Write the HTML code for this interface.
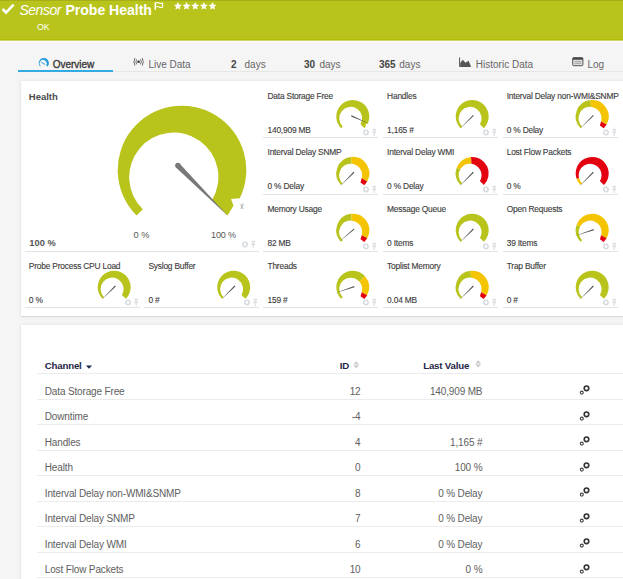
<!DOCTYPE html><html><head><meta charset="utf-8"><style>
*{margin:0;padding:0;box-sizing:border-box}
html,body{width:623px;height:579px;overflow:hidden;background:#f5f5f5;font-family:"Liberation Sans",sans-serif;position:relative}
.abs,.g,.wt,.wv,.dv,.tc,.tl{position:absolute}
#hdr{position:absolute;left:0;top:0;width:623px;height:40px;background:#b8c41c;border-top:1px solid #a6ae18;border-bottom:1px solid #b2bc06}
#hdrw{position:absolute;left:0;top:40px;width:623px;height:2px;background:linear-gradient(#cdd468 0,#cdd468 1px,#fdfdfd 1px)}
.ttl{position:absolute;color:#fff;white-space:nowrap}
.tab{position:absolute;top:58.6px;font-size:10px;color:#666;white-space:nowrap;line-height:12px}
.panel{position:absolute;background:#fff;box-shadow:0 0 4px rgba(0,0,0,0.09),0 1px 1px rgba(0,0,0,0.07)}
.wt,.wv{font-size:8.4px;letter-spacing:-0.2px;color:#3c3c3c;-webkit-text-stroke:0.12px #3c3c3c;white-space:nowrap;line-height:9px}
.dv{height:1px;background:#e3e3e3}
.tc{font-size:10px;letter-spacing:-0.15px;color:#606060;white-space:nowrap;line-height:11px}
.tr{text-align:right}
.tl{left:37px;width:586px;height:1px;background:#ececec}
.th{position:absolute;font-size:9.7px;letter-spacing:-0.2px;font-weight:bold;color:#1f2646;white-space:nowrap;line-height:11px}
</style></head><body>
<div id="hdr"></div><div id="hdrw"></div>
<svg class="g" style="left:1px;top:3px" width="14" height="12" viewBox="0 0 14 12"><path d="M1.6 6 L5 9.6 L12.6 1.6" stroke="#fff" stroke-width="2.6" fill="none"/></svg>
<div class="ttl" style="left:19.5px;top:2px;font-size:14px;font-style:italic;letter-spacing:-0.5px;line-height:17px">Sensor</div>
<div class="ttl" style="left:65.5px;top:2px;font-size:14px;font-weight:bold;line-height:17px">Probe Health</div>
<svg class="g" style="left:154px;top:2px" width="10" height="9" viewBox="0 0 10 9"><path d="M1.3 0.3V7.8" stroke="#fff" stroke-width="1.5" fill="none"/><path d="M2 1.1 Q3.6 0.2 5.2 1.1 T8.6 1.1 V5.0 Q7 5.9 5.2 5.0 T2 5.0" stroke="#fff" stroke-width="1.1" fill="none"/></svg>
<svg class="g" style="left:173.5px;top:0px" width="45" height="12"><path d="M3.90 2.00 L5.05 4.62 L7.89 4.90 L5.75 6.80 L6.37 9.60 L3.90 8.15 L1.43 9.60 L2.05 6.80 L-0.09 4.90 L2.75 4.62Z M12.55 2.00 L13.70 4.62 L16.54 4.90 L14.40 6.80 L15.02 9.60 L12.55 8.15 L10.08 9.60 L10.70 6.80 L8.56 4.90 L11.40 4.62Z M21.20 2.00 L22.35 4.62 L25.19 4.90 L23.05 6.80 L23.67 9.60 L21.20 8.15 L18.73 9.60 L19.35 6.80 L17.21 4.90 L20.05 4.62Z M29.85 2.00 L31.00 4.62 L33.84 4.90 L31.70 6.80 L32.32 9.60 L29.85 8.15 L27.38 9.60 L28.00 6.80 L25.86 4.90 L28.70 4.62Z M38.50 2.00 L39.65 4.62 L42.49 4.90 L40.35 6.80 L40.97 9.60 L38.50 8.15 L36.03 9.60 L36.65 6.80 L34.51 4.90 L37.35 4.62Z" fill="#fff"/></svg>
<div class="ttl" style="left:37px;top:22px;font-size:8.8px;line-height:10px">OK</div>

<div class="abs" style="left:18px;top:71px;width:605px;height:1px;background:#e6e6e6"></div>
<div class="abs" style="left:18px;top:70px;width:95px;height:2px;background:#33abe2"></div>
<svg class="g" style="left:37px;top:56px" width="14" height="12"><path d="M3.19 10.61 A5.10 5.10 0 1 1 10.41 10.61 L9.18 9.38 A3.54 3.54 0 1 0 3.69 10.11 Z" fill="#1e9ad6"/><path d="M4.7 6.4 L7.6 8.3" stroke="#4aaee0" stroke-width="1.1" stroke-linecap="round"/></svg>
<div class="tab" style="left:52.8px;color:#3d3d3d;font-size:10px;-webkit-text-stroke:0.35px #3d3d3d;letter-spacing:-0.05px">Overview</div>
<svg class="g" style="left:133px;top:57px" width="12" height="10" viewBox="0 0 12 10"><circle cx="5.6" cy="4.8" r="1.3" fill="#333"/><path d="M3.6 2.3 Q2.2 4.8 3.6 7.3 M7.6 2.3 Q9 4.8 7.6 7.3 M2.0 1.0 Q-0.2 4.8 2.0 8.6 M9.2 1.0 Q11.4 4.8 9.2 8.6" stroke="#666" stroke-width="0.95" fill="none"/></svg>
<div class="tab" style="left:148.4px">Live Data</div>
<div class="tab" style="left:231px"><b style="color:#444">2</b><span style="margin-left:8px">days</span></div>
<div class="tab" style="left:304px"><b style="color:#444">30</b><span style="margin-left:4.3px">days</span></div>
<div class="tab" style="left:379px"><b style="color:#444">365</b><span style="margin-left:3.6px">days</span></div>
<svg class="g" style="left:459px;top:57px" width="12" height="10" viewBox="0 0 12 10"><path d="M0.6 0.5V9.5H11.8" stroke="#555" stroke-width="1" fill="none"/><path d="M1.2 9 L1.2 6 L3.8 2.8 L6.5 5.8 L9.6 3.8 L11.8 9 Z" fill="#555"/></svg>
<div class="tab" style="left:475.8px">Historic Data</div>
<svg class="g" style="left:572px;top:57px" width="12" height="10" viewBox="0 0 12 10"><rect x="0.7" y="0.7" width="10.2" height="8" rx="1" fill="#ddd" stroke="#555" stroke-width="1"/><rect x="0.7" y="0.7" width="10.2" height="2" fill="#444"/><path d="M2.6 4.6H9 M2.6 6.4H9" stroke="#999" stroke-width="0.8"/></svg>
<div class="tab" style="left:587.5px">Log</div>

<div class="panel" style="left:21px;top:81px;width:610px;height:235px"></div>
<div class="panel" style="left:21px;top:325px;width:610px;height:270px"></div>

<div class="abs" style="left:28.8px;top:90.5px;font-size:9.5px;font-weight:bold;color:#4a4a4a;line-height:11px">Health</div>
<svg class="g" style="left:100px;top:95px" width="160" height="130"><path d="M36.53 120.47 A64.30 64.30 0 1 1 139.79 103.19 L131.00 104.00 L133.50 110.69 L127.47 120.47 L112.04 105.04 A44.60 44.60 0 1 0 42.82 114.18 Z" fill="#b8c41c"/><circle cx="77.85" cy="70.55" r="2.7" fill="#787878"/><path d="M79.75 68.64 L127.12 119.91 L126.91 120.12 L75.94 72.45 Z" fill="#787878"/><path d="M77.85 70.55 L77.85 70.55" stroke="#787878" stroke-width="0"/><path d="M140.6 109.3h3.4" stroke="#aaa" stroke-width="0.7"/><text x="140.3" y="114.2" font-size="6.5" fill="#8a8a8a" font-family="Liberation Sans">x</text></svg>
<div class="abs" style="left:29.3px;top:238px;font-size:9.3px;font-weight:bold;color:#555;line-height:11px">100 %</div>
<div class="abs" style="left:133.5px;top:229.8px;font-size:9.2px;color:#555;line-height:10px">0 %</div>
<div class="abs" style="left:211px;top:229.8px;font-size:9px;letter-spacing:-0.1px;color:#555;line-height:10px">100 %</div>
<div class="dv" style="left:24.6px;top:251px;width:234px"></div>
<svg class="g" style="left:240.6px;top:240.1px" width="16" height="9" viewBox="0 0 16 9"><circle cx="4" cy="4.5" r="2.6" fill="none" stroke="#d6d9dd" stroke-width="1.2" stroke-dasharray="1.0 0.63"/><circle cx="4" cy="4.5" r="1.95" fill="none" stroke="#d6d9dd" stroke-width="1.1"/><path d="M10.4 1.3h3.6M11.4 1.3v3.1M13 1.3v3.1M10.2 4.6h4M12.2 4.6v3.6" stroke="#d3d6da" stroke-width="0.9" fill="none"/><rect x="11.4" y="1.3" width="1.6" height="3.1" fill="#e6e8ea"/></svg>
<div class="wt" style="left:267.5px;top:91.7px">Data Storage Free</div>
<div class="wv" style="left:267.5px;top:125.6px">140,909 MB</div>
<div class="dv" style="left:263.4px;top:137px;width:115px"></div>
<svg class="g" style="left:327px;top:94px" width="50" height="44"><path d="M14.13 34.17 A16.50 16.50 0 1 1 40.63 29.73 L38.37 29.94 L39.02 31.66 L37.47 34.17 L33.51 30.21 A11.44 11.44 0 1 0 15.75 32.55 Z" fill="#b8c41c"/><path d="M24.05 22.38 L42.68 30.02 L24.54 21.28 Z" fill="#505050"/></svg>
<svg class="g" style="left:362.3px;top:128.0px" width="16" height="9" viewBox="0 0 16 9"><circle cx="4" cy="4.5" r="2.6" fill="none" stroke="#d6d9dd" stroke-width="1.2" stroke-dasharray="1.0 0.63"/><circle cx="4" cy="4.5" r="1.95" fill="none" stroke="#d6d9dd" stroke-width="1.1"/><path d="M10.4 1.3h3.6M11.4 1.3v3.1M13 1.3v3.1M10.2 4.6h4M12.2 4.6v3.6" stroke="#d3d6da" stroke-width="0.9" fill="none"/><rect x="11.4" y="1.3" width="1.6" height="3.1" fill="#e6e8ea"/></svg>
<div class="wt" style="left:387.1px;top:91.7px">Handles</div>
<div class="wv" style="left:387.1px;top:125.6px">1,165 #</div>
<div class="dv" style="left:383.4px;top:137px;width:115px"></div>
<svg class="g" style="left:447px;top:94px" width="50" height="44"><path d="M13.53 34.17 A16.50 16.50 0 1 1 36.87 34.17 L32.91 30.21 A11.44 11.44 0 1 0 15.15 32.55 Z" fill="#b8c41c"/><path d="M25.94 20.91 L12.13 35.57 L26.79 21.76 Z" fill="#505050"/></svg>
<svg class="g" style="left:481.7px;top:128.0px" width="16" height="9" viewBox="0 0 16 9"><circle cx="4" cy="4.5" r="2.6" fill="none" stroke="#d6d9dd" stroke-width="1.2" stroke-dasharray="1.0 0.63"/><circle cx="4" cy="4.5" r="1.95" fill="none" stroke="#d6d9dd" stroke-width="1.1"/><path d="M10.4 1.3h3.6M11.4 1.3v3.1M13 1.3v3.1M10.2 4.6h4M12.2 4.6v3.6" stroke="#d3d6da" stroke-width="0.9" fill="none"/><rect x="11.4" y="1.3" width="1.6" height="3.1" fill="#e6e8ea"/></svg>
<div class="wt" style="left:506.7px;top:91.7px">Interval Delay non-WMI&amp;SNMP</div>
<div class="wv" style="left:506.7px;top:125.6px">0 % Delay</div>
<div class="dv" style="left:503.2px;top:137px;width:115px"></div>
<svg class="g" style="left:567px;top:94px" width="50" height="44"><path d="M13.53 34.17 A16.50 16.50 0 0 1 23.48 6.09 L24.19 12.93 A11.44 11.44 0 0 0 15.15 32.55 Z" fill="#b8c41c"/><path d="M23.48 6.09 A16.50 16.50 0 0 1 39.63 30.50 L34.11 27.44 A11.44 11.44 0 0 0 24.19 12.93 Z" fill="#f5c400"/><path d="M39.63 30.50 L34.11 27.44 L32.92 31.49 L36.73 34.30 Z" fill="#e3000f"/><path d="M25.94 20.91 L12.13 35.57 L26.79 21.76 Z" fill="#505050"/></svg>
<svg class="g" style="left:601.7px;top:128.0px" width="16" height="9" viewBox="0 0 16 9"><circle cx="4" cy="4.5" r="2.6" fill="none" stroke="#d6d9dd" stroke-width="1.2" stroke-dasharray="1.0 0.63"/><circle cx="4" cy="4.5" r="1.95" fill="none" stroke="#d6d9dd" stroke-width="1.1"/><path d="M10.4 1.3h3.6M11.4 1.3v3.1M13 1.3v3.1M10.2 4.6h4M12.2 4.6v3.6" stroke="#d3d6da" stroke-width="0.9" fill="none"/><rect x="11.4" y="1.3" width="1.6" height="3.1" fill="#e6e8ea"/></svg>
<div class="wt" style="left:267.5px;top:148.2px">Interval Delay SNMP</div>
<div class="wv" style="left:267.5px;top:182.1px">0 % Delay</div>
<div class="dv" style="left:263.4px;top:194px;width:115px"></div>
<svg class="g" style="left:327px;top:151px" width="50" height="44"><path d="M14.13 34.07 A16.50 16.50 0 0 1 24.08 5.99 L24.79 12.83 A11.44 11.44 0 0 0 15.75 32.45 Z" fill="#b8c41c"/><path d="M24.08 5.99 A16.50 16.50 0 0 1 40.23 30.40 L34.71 27.34 A11.44 11.44 0 0 0 24.79 12.83 Z" fill="#f5c400"/><path d="M40.23 30.40 L34.71 27.34 L33.52 31.39 L37.33 34.20 Z" fill="#e3000f"/><path d="M26.54 20.81 L12.73 35.47 L27.39 21.66 Z" fill="#505050"/></svg>
<svg class="g" style="left:362.3px;top:184.5px" width="16" height="9" viewBox="0 0 16 9"><circle cx="4" cy="4.5" r="2.6" fill="none" stroke="#d6d9dd" stroke-width="1.2" stroke-dasharray="1.0 0.63"/><circle cx="4" cy="4.5" r="1.95" fill="none" stroke="#d6d9dd" stroke-width="1.1"/><path d="M10.4 1.3h3.6M11.4 1.3v3.1M13 1.3v3.1M10.2 4.6h4M12.2 4.6v3.6" stroke="#d3d6da" stroke-width="0.9" fill="none"/><rect x="11.4" y="1.3" width="1.6" height="3.1" fill="#e6e8ea"/></svg>
<div class="wt" style="left:387.1px;top:148.2px">Interval Delay WMI</div>
<div class="wv" style="left:387.1px;top:182.1px">0 % Delay</div>
<div class="dv" style="left:383.4px;top:194px;width:115px"></div>
<svg class="g" style="left:447px;top:151px" width="50" height="44"><path d="M13.53 34.07 A16.50 16.50 0 0 1 9.70 16.76 L13.42 18.11 A11.44 11.44 0 0 0 15.15 32.45 Z" fill="#b8c41c"/><path d="M9.70 16.76 A16.50 16.50 0 0 1 24.05 5.94 L24.53 12.87 A11.44 11.44 0 0 0 13.42 18.11 Z" fill="#f5c400"/><path d="M24.05 5.94 A16.50 16.50 0 0 1 36.87 34.07 L32.91 30.11 A11.44 11.44 0 0 0 24.53 12.87 Z" fill="#e3000f"/><path d="M25.94 20.81 L12.13 35.47 L26.79 21.66 Z" fill="#505050"/></svg>
<svg class="g" style="left:481.7px;top:184.5px" width="16" height="9" viewBox="0 0 16 9"><circle cx="4" cy="4.5" r="2.6" fill="none" stroke="#d6d9dd" stroke-width="1.2" stroke-dasharray="1.0 0.63"/><circle cx="4" cy="4.5" r="1.95" fill="none" stroke="#d6d9dd" stroke-width="1.1"/><path d="M10.4 1.3h3.6M11.4 1.3v3.1M13 1.3v3.1M10.2 4.6h4M12.2 4.6v3.6" stroke="#d3d6da" stroke-width="0.9" fill="none"/><rect x="11.4" y="1.3" width="1.6" height="3.1" fill="#e6e8ea"/></svg>
<div class="wt" style="left:506.7px;top:148.2px">Lost Flow Packets</div>
<div class="wv" style="left:506.7px;top:182.1px">0 %</div>
<div class="dv" style="left:503.2px;top:194px;width:115px"></div>
<svg class="g" style="left:567px;top:151px" width="50" height="44"><path d="M13.53 34.07 A16.50 16.50 0 0 1 9.60 27.77 L11.98 26.95 A11.44 11.44 0 0 0 15.15 32.45 Z" fill="#f5c400"/><path d="M9.60 27.77 A16.50 16.50 0 1 1 36.87 34.07 L32.91 30.11 A11.44 11.44 0 1 0 11.98 26.95 Z" fill="#e3000f"/><path d="M25.94 20.81 L12.13 35.47 L26.79 21.66 Z" fill="#505050"/></svg>
<svg class="g" style="left:601.7px;top:184.5px" width="16" height="9" viewBox="0 0 16 9"><circle cx="4" cy="4.5" r="2.6" fill="none" stroke="#d6d9dd" stroke-width="1.2" stroke-dasharray="1.0 0.63"/><circle cx="4" cy="4.5" r="1.95" fill="none" stroke="#d6d9dd" stroke-width="1.1"/><path d="M10.4 1.3h3.6M11.4 1.3v3.1M13 1.3v3.1M10.2 4.6h4M12.2 4.6v3.6" stroke="#d3d6da" stroke-width="0.9" fill="none"/><rect x="11.4" y="1.3" width="1.6" height="3.1" fill="#e6e8ea"/></svg>
<div class="wt" style="left:267.5px;top:205.2px">Memory Usage</div>
<div class="wv" style="left:267.5px;top:239.1px">82 MB</div>
<div class="dv" style="left:263.4px;top:251px;width:115px"></div>
<svg class="g" style="left:327px;top:208px" width="50" height="44"><path d="M14.13 33.87 A16.50 16.50 0 0 1 24.08 5.79 L24.79 12.63 A11.44 11.44 0 0 0 15.75 32.25 Z" fill="#b8c41c"/><path d="M24.08 5.79 A16.50 16.50 0 0 1 40.23 30.20 L34.71 27.14 A11.44 11.44 0 0 0 24.79 12.63 Z" fill="#f5c400"/><path d="M40.23 30.20 L34.71 27.14 L33.52 31.19 L37.33 34.00 Z" fill="#e3000f"/><path d="M26.68 20.68 L11.64 34.08 L27.45 21.60 Z" fill="#505050"/></svg>
<svg class="g" style="left:362.3px;top:241.5px" width="16" height="9" viewBox="0 0 16 9"><circle cx="4" cy="4.5" r="2.6" fill="none" stroke="#d6d9dd" stroke-width="1.2" stroke-dasharray="1.0 0.63"/><circle cx="4" cy="4.5" r="1.95" fill="none" stroke="#d6d9dd" stroke-width="1.1"/><path d="M10.4 1.3h3.6M11.4 1.3v3.1M13 1.3v3.1M10.2 4.6h4M12.2 4.6v3.6" stroke="#d3d6da" stroke-width="0.9" fill="none"/><rect x="11.4" y="1.3" width="1.6" height="3.1" fill="#e6e8ea"/></svg>
<div class="wt" style="left:387.1px;top:205.2px">Message Queue</div>
<div class="wv" style="left:387.1px;top:239.1px">0 Items</div>
<div class="dv" style="left:383.4px;top:251px;width:115px"></div>
<svg class="g" style="left:447px;top:208px" width="50" height="44"><path d="M13.53 33.87 A16.50 16.50 0 1 1 36.87 33.87 L32.91 29.91 A11.44 11.44 0 1 0 15.15 32.25 Z" fill="#b8c41c"/><path d="M25.94 20.61 L12.13 35.27 L26.79 21.46 Z" fill="#505050"/></svg>
<svg class="g" style="left:481.7px;top:241.5px" width="16" height="9" viewBox="0 0 16 9"><circle cx="4" cy="4.5" r="2.6" fill="none" stroke="#d6d9dd" stroke-width="1.2" stroke-dasharray="1.0 0.63"/><circle cx="4" cy="4.5" r="1.95" fill="none" stroke="#d6d9dd" stroke-width="1.1"/><path d="M10.4 1.3h3.6M11.4 1.3v3.1M13 1.3v3.1M10.2 4.6h4M12.2 4.6v3.6" stroke="#d3d6da" stroke-width="0.9" fill="none"/><rect x="11.4" y="1.3" width="1.6" height="3.1" fill="#e6e8ea"/></svg>
<div class="wt" style="left:506.7px;top:205.2px">Open Requests</div>
<div class="wv" style="left:506.7px;top:239.1px">39 Items</div>
<div class="dv" style="left:503.2px;top:251px;width:115px"></div>
<svg class="g" style="left:567px;top:208px" width="50" height="44"><path d="M13.53 33.87 A16.50 16.50 0 0 1 9.51 17.10 L13.19 18.30 A11.44 11.44 0 0 0 15.15 32.25 Z" fill="#b8c41c"/><path d="M9.51 17.10 A16.50 16.50 0 1 1 39.63 30.20 L34.11 27.14 A11.44 11.44 0 0 0 13.19 18.30 Z" fill="#f5c400"/><path d="M39.63 30.20 L34.11 27.14 L32.92 31.19 L36.73 34.00 Z" fill="#e3000f"/><path d="M26.58 21.12 L7.62 27.91 L26.95 22.26 Z" fill="#505050"/></svg>
<svg class="g" style="left:601.7px;top:241.5px" width="16" height="9" viewBox="0 0 16 9"><circle cx="4" cy="4.5" r="2.6" fill="none" stroke="#d6d9dd" stroke-width="1.2" stroke-dasharray="1.0 0.63"/><circle cx="4" cy="4.5" r="1.95" fill="none" stroke="#d6d9dd" stroke-width="1.1"/><path d="M10.4 1.3h3.6M11.4 1.3v3.1M13 1.3v3.1M10.2 4.6h4M12.2 4.6v3.6" stroke="#d3d6da" stroke-width="0.9" fill="none"/><rect x="11.4" y="1.3" width="1.6" height="3.1" fill="#e6e8ea"/></svg>
<div class="wt" style="left:28.8px;top:261.7px">Probe Process CPU Load</div>
<div class="wv" style="left:28.8px;top:295.6px">0 %</div>
<div class="dv" style="left:24.6px;top:307px;width:115px"></div>
<svg class="g" style="left:89px;top:265px" width="50" height="44"><path d="M13.53 33.87 A16.50 16.50 0 1 1 36.87 33.87 L32.91 29.91 A11.44 11.44 0 1 0 15.15 32.25 Z" fill="#b8c41c"/><path d="M25.94 20.61 L12.13 35.27 L26.79 21.46 Z" fill="#505050"/></svg>
<svg class="g" style="left:123.7px;top:298.0px" width="16" height="9" viewBox="0 0 16 9"><circle cx="4" cy="4.5" r="2.6" fill="none" stroke="#d6d9dd" stroke-width="1.2" stroke-dasharray="1.0 0.63"/><circle cx="4" cy="4.5" r="1.95" fill="none" stroke="#d6d9dd" stroke-width="1.1"/><path d="M10.4 1.3h3.6M11.4 1.3v3.1M13 1.3v3.1M10.2 4.6h4M12.2 4.6v3.6" stroke="#d3d6da" stroke-width="0.9" fill="none"/><rect x="11.4" y="1.3" width="1.6" height="3.1" fill="#e6e8ea"/></svg>
<div class="wt" style="left:148.4px;top:261.7px">Syslog Buffer</div>
<div class="wv" style="left:148.4px;top:295.6px">0 #</div>
<div class="dv" style="left:144.2px;top:307px;width:115px"></div>
<svg class="g" style="left:208px;top:265px" width="50" height="44"><path d="M14.03 33.87 A16.50 16.50 0 1 1 37.37 33.87 L33.41 29.91 A11.44 11.44 0 1 0 15.65 32.25 Z" fill="#b8c41c"/><path d="M26.44 20.61 L12.63 35.27 L27.29 21.46 Z" fill="#505050"/></svg>
<svg class="g" style="left:243.2px;top:298.0px" width="16" height="9" viewBox="0 0 16 9"><circle cx="4" cy="4.5" r="2.6" fill="none" stroke="#d6d9dd" stroke-width="1.2" stroke-dasharray="1.0 0.63"/><circle cx="4" cy="4.5" r="1.95" fill="none" stroke="#d6d9dd" stroke-width="1.1"/><path d="M10.4 1.3h3.6M11.4 1.3v3.1M13 1.3v3.1M10.2 4.6h4M12.2 4.6v3.6" stroke="#d3d6da" stroke-width="0.9" fill="none"/><rect x="11.4" y="1.3" width="1.6" height="3.1" fill="#e6e8ea"/></svg>
<div class="wt" style="left:267.5px;top:261.7px">Threads</div>
<div class="wv" style="left:267.5px;top:295.6px">159 #</div>
<div class="dv" style="left:263.4px;top:307px;width:115px"></div>
<svg class="g" style="left:327px;top:265px" width="50" height="44"><path d="M14.13 33.87 A16.50 16.50 0 1 1 38.06 11.16 L32.24 16.40 A11.44 11.44 0 1 0 15.75 32.25 Z" fill="#b8c41c"/><path d="M38.06 11.16 A16.50 16.50 0 0 1 40.23 30.20 L34.71 27.14 A11.44 11.44 0 0 0 32.24 16.40 Z" fill="#f5c400"/><path d="M40.23 30.20 L34.71 27.14 L33.52 31.19 L37.33 34.00 Z" fill="#e3000f"/><path d="M27.18 21.12 L8.22 27.91 L27.55 22.26 Z" fill="#505050"/></svg>
<svg class="g" style="left:362.3px;top:298.0px" width="16" height="9" viewBox="0 0 16 9"><circle cx="4" cy="4.5" r="2.6" fill="none" stroke="#d6d9dd" stroke-width="1.2" stroke-dasharray="1.0 0.63"/><circle cx="4" cy="4.5" r="1.95" fill="none" stroke="#d6d9dd" stroke-width="1.1"/><path d="M10.4 1.3h3.6M11.4 1.3v3.1M13 1.3v3.1M10.2 4.6h4M12.2 4.6v3.6" stroke="#d3d6da" stroke-width="0.9" fill="none"/><rect x="11.4" y="1.3" width="1.6" height="3.1" fill="#e6e8ea"/></svg>
<div class="wt" style="left:387.1px;top:261.7px">Toplist Memory</div>
<div class="wv" style="left:387.1px;top:295.6px">0.04 MB</div>
<div class="dv" style="left:383.4px;top:307px;width:115px"></div>
<svg class="g" style="left:447px;top:265px" width="50" height="44"><path d="M13.53 33.87 A16.50 16.50 0 0 1 23.48 5.79 L24.19 12.63 A11.44 11.44 0 0 0 15.15 32.25 Z" fill="#b8c41c"/><path d="M23.48 5.79 A16.50 16.50 0 0 1 39.63 30.20 L34.11 27.14 A11.44 11.44 0 0 0 24.19 12.63 Z" fill="#f5c400"/><path d="M39.63 30.20 L34.11 27.14 L32.92 31.19 L36.73 34.00 Z" fill="#e3000f"/><path d="M25.94 20.61 L12.13 35.27 L26.79 21.46 Z" fill="#505050"/></svg>
<svg class="g" style="left:481.7px;top:298.0px" width="16" height="9" viewBox="0 0 16 9"><circle cx="4" cy="4.5" r="2.6" fill="none" stroke="#d6d9dd" stroke-width="1.2" stroke-dasharray="1.0 0.63"/><circle cx="4" cy="4.5" r="1.95" fill="none" stroke="#d6d9dd" stroke-width="1.1"/><path d="M10.4 1.3h3.6M11.4 1.3v3.1M13 1.3v3.1M10.2 4.6h4M12.2 4.6v3.6" stroke="#d3d6da" stroke-width="0.9" fill="none"/><rect x="11.4" y="1.3" width="1.6" height="3.1" fill="#e6e8ea"/></svg>
<div class="wt" style="left:506.7px;top:261.7px">Trap Buffer</div>
<div class="wv" style="left:506.7px;top:295.6px">0 #</div>
<div class="dv" style="left:503.2px;top:307px;width:115px"></div>
<svg class="g" style="left:567px;top:265px" width="50" height="44"><path d="M13.53 33.87 A16.50 16.50 0 1 1 36.87 33.87 L32.91 29.91 A11.44 11.44 0 1 0 15.15 32.25 Z" fill="#b8c41c"/><path d="M25.94 20.61 L12.13 35.27 L26.79 21.46 Z" fill="#505050"/></svg>
<svg class="g" style="left:601.7px;top:298.0px" width="16" height="9" viewBox="0 0 16 9"><circle cx="4" cy="4.5" r="2.6" fill="none" stroke="#d6d9dd" stroke-width="1.2" stroke-dasharray="1.0 0.63"/><circle cx="4" cy="4.5" r="1.95" fill="none" stroke="#d6d9dd" stroke-width="1.1"/><path d="M10.4 1.3h3.6M11.4 1.3v3.1M13 1.3v3.1M10.2 4.6h4M12.2 4.6v3.6" stroke="#d3d6da" stroke-width="0.9" fill="none"/><rect x="11.4" y="1.3" width="1.6" height="3.1" fill="#e6e8ea"/></svg>
<div class="th" style="left:44.8px;top:360.3px">Channel</div>
<svg class="g" style="left:86px;top:364.8px" width="7" height="5"><path d="M0 0.5H6L3 3.8Z" fill="#1f2646"/></svg>
<div class="th" style="left:339.7px;top:360.3px">ID</div>
<svg class="g" style="left:352.5px;top:360.5px" width="7" height="9"><path d="M0.2 3.6H6.2L3.2 0.2Z M0.2 4.2H6.2L3.2 7.5Z" fill="#cdcdcd"/></svg>
<div class="th" style="left:423.2px;top:360.3px">Last Value</div>
<svg class="g" style="left:474.5px;top:359.5px" width="7" height="9"><path d="M0.2 3.6H6.2L3.2 0.2Z M0.2 4.2H6.2L3.2 7.5Z" fill="#cdcdcd"/></svg>
<div class="tl" style="top:373px"></div>
<div class="tc" style="left:44.8px;top:385.9px">Data Storage Free</div>
<div class="tc tr" style="left:300px;width:60.5px;top:385.9px">12</div>
<div class="tc tr" style="left:380px;width:102.4px;top:385.9px">140,909 MB</div>
<div class="tl" style="top:399px"></div>
<svg class="g" style="left:578px;top:385.0px" width="12" height="10"><circle cx="8.5" cy="3.3" r="2.3" fill="none" stroke="#333" stroke-width="1.6"/><circle cx="3.8" cy="7.6" r="1.5" fill="none" stroke="#444" stroke-width="1.1"/></svg>
<div class="tc" style="left:44.8px;top:411.4px">Downtime</div>
<div class="tc tr" style="left:300px;width:60.5px;top:411.4px">-4</div>
<div class="tl" style="top:424px"></div>
<svg class="g" style="left:578px;top:410.5px" width="12" height="10"><circle cx="8.5" cy="3.3" r="2.3" fill="none" stroke="#333" stroke-width="1.6"/><circle cx="3.8" cy="7.6" r="1.5" fill="none" stroke="#444" stroke-width="1.1"/></svg>
<div class="tc" style="left:44.8px;top:436.9px">Handles</div>
<div class="tc tr" style="left:300px;width:60.5px;top:436.9px">4</div>
<div class="tc tr" style="left:380px;width:102.4px;top:436.9px">1,165 #</div>
<div class="tl" style="top:450px"></div>
<svg class="g" style="left:578px;top:436.0px" width="12" height="10"><circle cx="8.5" cy="3.3" r="2.3" fill="none" stroke="#333" stroke-width="1.6"/><circle cx="3.8" cy="7.6" r="1.5" fill="none" stroke="#444" stroke-width="1.1"/></svg>
<div class="tc" style="left:44.8px;top:462.4px">Health</div>
<div class="tc tr" style="left:300px;width:60.5px;top:462.4px">0</div>
<div class="tc tr" style="left:380px;width:102.4px;top:462.4px">100 %</div>
<div class="tl" style="top:475px"></div>
<svg class="g" style="left:578px;top:461.5px" width="12" height="10"><circle cx="8.5" cy="3.3" r="2.3" fill="none" stroke="#333" stroke-width="1.6"/><circle cx="3.8" cy="7.6" r="1.5" fill="none" stroke="#444" stroke-width="1.1"/></svg>
<div class="tc" style="left:44.8px;top:487.9px">Interval Delay non-WMI&amp;SNMP</div>
<div class="tc tr" style="left:300px;width:60.5px;top:487.9px">8</div>
<div class="tc tr" style="left:380px;width:102.4px;top:487.9px">0 % Delay</div>
<div class="tl" style="top:501px"></div>
<svg class="g" style="left:578px;top:487.0px" width="12" height="10"><circle cx="8.5" cy="3.3" r="2.3" fill="none" stroke="#333" stroke-width="1.6"/><circle cx="3.8" cy="7.6" r="1.5" fill="none" stroke="#444" stroke-width="1.1"/></svg>
<div class="tc" style="left:44.8px;top:513.4px">Interval Delay SNMP</div>
<div class="tc tr" style="left:300px;width:60.5px;top:513.4px">7</div>
<div class="tc tr" style="left:380px;width:102.4px;top:513.4px">0 % Delay</div>
<div class="tl" style="top:526px"></div>
<svg class="g" style="left:578px;top:512.5px" width="12" height="10"><circle cx="8.5" cy="3.3" r="2.3" fill="none" stroke="#333" stroke-width="1.6"/><circle cx="3.8" cy="7.6" r="1.5" fill="none" stroke="#444" stroke-width="1.1"/></svg>
<div class="tc" style="left:44.8px;top:538.9px">Interval Delay WMI</div>
<div class="tc tr" style="left:300px;width:60.5px;top:538.9px">6</div>
<div class="tc tr" style="left:380px;width:102.4px;top:538.9px">0 % Delay</div>
<div class="tl" style="top:552px"></div>
<svg class="g" style="left:578px;top:538.0px" width="12" height="10"><circle cx="8.5" cy="3.3" r="2.3" fill="none" stroke="#333" stroke-width="1.6"/><circle cx="3.8" cy="7.6" r="1.5" fill="none" stroke="#444" stroke-width="1.1"/></svg>
<div class="tc" style="left:44.8px;top:564.4px">Lost Flow Packets</div>
<div class="tc tr" style="left:300px;width:60.5px;top:564.4px">10</div>
<div class="tc tr" style="left:380px;width:102.4px;top:564.4px">0 %</div>
<div class="tl" style="top:577px"></div>
<svg class="g" style="left:578px;top:563.5px" width="12" height="10"><circle cx="8.5" cy="3.3" r="2.3" fill="none" stroke="#333" stroke-width="1.6"/><circle cx="3.8" cy="7.6" r="1.5" fill="none" stroke="#444" stroke-width="1.1"/></svg>
</body></html>
